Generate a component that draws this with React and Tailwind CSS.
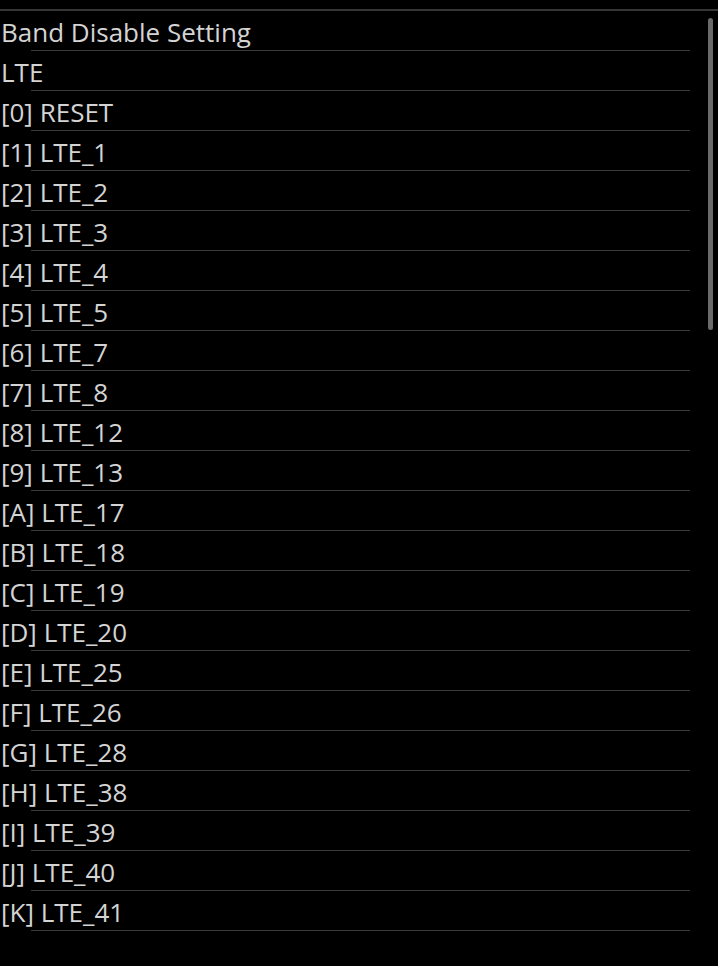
import React from 'react';

const bands = [
  ['0', 'RESET'], ['1', 'LTE_1'], ['2', 'LTE_2'], ['3', 'LTE_3'], ['4', 'LTE_4'],
  ['5', 'LTE_5'], ['6', 'LTE_7'], ['7', 'LTE_8'], ['8', 'LTE_12'], ['9', 'LTE_13'],
  ['A', 'LTE_17'], ['B', 'LTE_18'], ['C', 'LTE_19'], ['D', 'LTE_20'], ['E', 'LTE_25'],
  ['F', 'LTE_26'], ['G', 'LTE_28'], ['H', 'LTE_38'], ['I', 'LTE_39'], ['J', 'LTE_40'],
  ['K', 'LTE_41'],
];

const Row = ({ children }) => (
  <div className="h-[40px] flex flex-col">
    <div className="flex-1 flex items-center pt-[3px] pl-[1px] text-[26px] leading-none text-[#d4d4d4]">
      {children}
    </div>
    <div className="ml-[31px] w-[659px] h-px bg-[#3a3a3a]" />
  </div>
);

const App = () => {
  const lines = ['Band Disable Setting', 'LTE', ...bands.map(([k, v]) => `[${k}] ${v}`)];

  return (
    <div className="min-h-screen w-full bg-black pt-[9px] font-['Open_Sans',sans-serif]">
      <div className="relative border-t-2 border-[#363636]">
        {lines.map((line) => (
          <Row key={line}>{line}</Row>
        ))}
        {/* scrollbar */}
        <div className="absolute right-[5px] top-[7px] w-[5px] h-[312px] rounded-full bg-[#6a6a6a]" />
      </div>
    </div>
  );
};

export default App;
